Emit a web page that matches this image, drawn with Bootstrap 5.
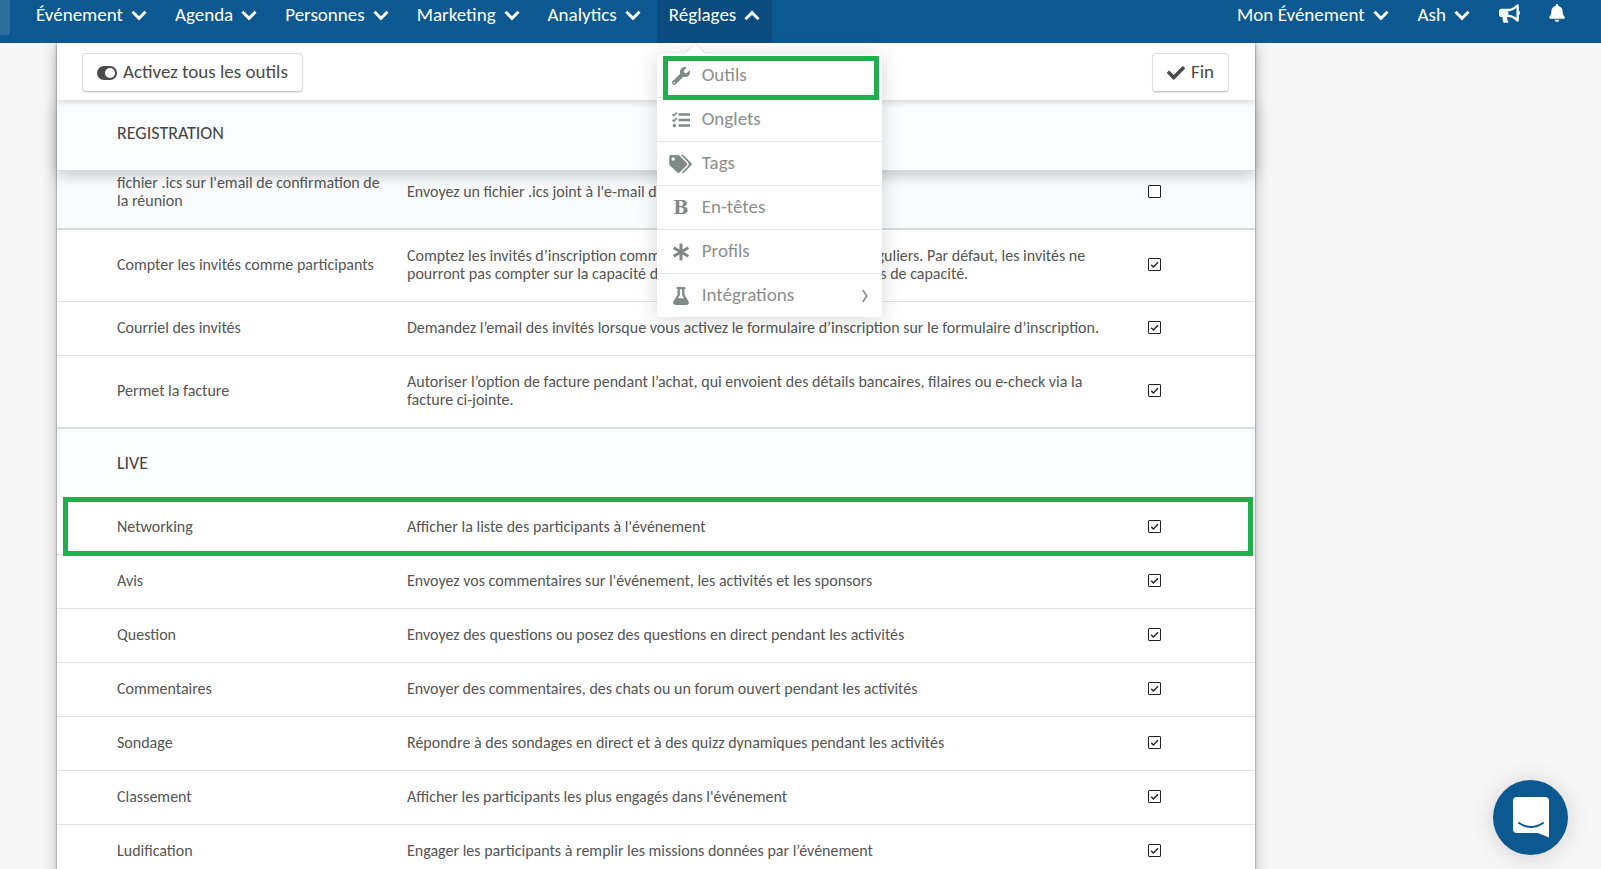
<!DOCTYPE html>
<html lang="fr">
<head>
<meta charset="utf-8">
<meta name="viewport" content="width=device-width, initial-scale=1">
<title>Outils</title>
<link href="https://cdn.jsdelivr.net/npm/bootstrap@5.3.0/dist/css/bootstrap.min.css" rel="stylesheet">
<style>
  :root { --brand: #0c5890; --mark: #22ae4c; --line: #dfe0e1; }
  body { font-family: Carlito, Lato, sans-serif; background: #f7f7f7; color: #555; height: 100vh; overflow: hidden; }
  svg { display: block; flex: none; }

  .topbar { background: var(--brand); height: 43px; z-index: 10; padding: 0 36px 0 0; }
  .brand-tab { width: 10px; height: 35px; background: #2f6d9c; border-radius: 0 0 3px 0; margin-right: 14px; }
  .topbar .nav-link { color: #fff; font-size: 19px; line-height: 22px; padding: 4px 12px 17px; display: flex; align-items: center; gap: 8px; }
  .topbar .nav-link.open { background: #0a4c80; }
  .main-nav { gap: 4px; }
  .user-nav { gap: 5px; }

  .tool-menu { display: block; position: absolute; top: 54px; left: 0; width: 225px; padding: 0; border: 0; border-radius: 4px; box-shadow: 0 2px 20px rgba(0,0,0,.16); }
  .tool-menu::before { content: ""; position: absolute; top: -7px; left: 31px; width: 14px; height: 14px; background: #fff; transform: rotate(45deg); box-shadow: -1px -1px 1px rgba(0,0,0,.08); }
  .tool-menu li + li { border-top: 1px solid #e4e5e5; }
  .tool-menu .dropdown-item { position: relative; display: flex; align-items: center; gap: 9px; height: 43px; padding: 0 14px 0 12px; color: #8a8f8d; font-size: 19px; border-radius: 4px; }
  .tool-menu .menu-icon { width: 24px; display: flex; justify-content: center; color: #7f8986; }
  .bold-mark { font: bold 18px/18px "DejaVu Serif", serif; }
  .picked::after { content: ""; position: absolute; inset: 2px 3px -3px 6px; border: 5px solid var(--mark); z-index: 1; }

  .page { padding: 0 346px 0 57px; }
  .panel { background: #fff; min-height: 100vh; box-shadow: 0 0 2px rgba(0,0,0,.55), 0 0 16px rgba(0,0,0,.25); }
  .tool-row { height: 57px; padding: 2px 26px 0 25px; background: #fff; position: relative; z-index: 3; box-shadow: 0 3px 6px rgba(0,0,0,.12); }
  .btn-tool { height: 39px; padding: 0 14px; font-size: 19px; color: #4a4a4a; background: #fff; border: 1px solid #dcdfde; border-bottom-color: #c9cccb; border-radius: 4px; box-shadow: 0 1px 1px rgba(0,0,0,.1); display: flex; align-items: center; gap: 6px; }
  .section-title { height: 72px; margin: 0; padding: 0 60px 2px; font-size: 18px; font-weight: 400; text-transform: uppercase; color: #444; background: #fafcfe; display: flex; align-items: center; }
  .section-title.stuck { height: 71px; position: relative; z-index: 2; border-bottom: 1px solid #d4d6d8; box-shadow: 0 4px 14px rgba(0,0,0,.22); }
  .under { margin-top: -14px; }
  .tools-table { table-layout: fixed; margin-bottom: 0; color: #555; font-size: 16px; line-height: 18px; --bs-table-bg: transparent; }
  .tools-table > tbody > tr > * { padding: 17px 30px 18px 0; border-bottom: 1px solid var(--line); vertical-align: middle; font-weight: 400; color: #555; }
  .tools-table > tbody > tr > th { padding-left: 60px; padding-right: 18px; }
  .tools-table > tbody > tr > .pick { padding-top: 0; padding-bottom: 2px; }
  .tools-table > tbody > tr.thick > * { border-bottom: 2px solid #dadddd; }
  .tools-table > tbody > tr.off > * { background: #fafbfd; }
  .tick { appearance: none; width: 13px; height: 13px; margin: 0; border: 1px solid #222; border-radius: 1px; display: block; background: #fff center/11px 11px no-repeat; }
  .tick:checked { background-image: url("data:image/svg+xml,%3Csvg xmlns='http://www.w3.org/2000/svg' viewBox='0 0 11 11'%3E%3Cpath d='M2.2 5.8l2.2 2.1 4.6-4.7' fill='none' stroke='%23222' stroke-width='1.4'/%3E%3C/svg%3E"); }
  .chosen { position: relative; }
  .chosen > th::after { content: ""; position: absolute; inset: -4px 2px -1px 6px; border: 5px solid var(--mark); }

  .chat { position: fixed; right: 33px; bottom: 14px; width: 75px; height: 75px; border: 0; border-radius: 50%; background: var(--brand); box-shadow: 0 2px 24px rgba(0,0,0,.16); display: flex; align-items: center; justify-content: center; padding: 0; }
</style>
</head>
<body>
<svg width="0" height="0" class="position-absolute" aria-hidden="true">
  <symbol id="down" viewBox="0 0 16 11"><path d="M1.5 1.8L8 8.3l6.500-6.500" fill="none" stroke="currentColor" stroke-width="3" stroke-linecap="butt"/></symbol>
  <symbol id="up" viewBox="0 0 16 11"><path d="M1.500 9.200L8 2.700l6.500 6.500" fill="none" stroke="currentColor" stroke-width="3"/></symbol>
</svg>

<header class="topbar d-flex justify-content-between position-relative">
  <nav class="d-flex">
    <div class="brand-tab"></div>
    <ul class="nav flex-nowrap main-nav">
      <li><a class="nav-link" href="#">Événement <svg width="16" height="11"><use href="#down"/></svg></a></li>
      <li><a class="nav-link" href="#">Agenda <svg width="16" height="11"><use href="#down"/></svg></a></li>
      <li><a class="nav-link" href="#">Personnes <svg width="16" height="11"><use href="#down"/></svg></a></li>
      <li><a class="nav-link" href="#">Marketing <svg width="16" height="11"><use href="#down"/></svg></a></li>
      <li><a class="nav-link" href="#">Analytics <svg width="16" height="11"><use href="#down"/></svg></a></li>
      <li class="position-relative">
        <a class="nav-link open" href="#" aria-expanded="true">Réglages <svg width="16" height="11"><use href="#up"/></svg></a>
        <ul class="dropdown-menu tool-menu">
          <li><a class="dropdown-item picked" href="#"><span class="menu-icon"><svg width="18" height="18" viewBox="0 0 512 512" fill="currentColor"><path d="M507.730 109.100c-2.240-9.030-13.540-12.090-20.120-5.510l-74.360 74.360-67.880-11.310-11.310-67.880 74.360-74.360c6.620-6.620 3.430-17.900-5.660-20.160-47.380-11.740-99.550.91-136.580 37.930-39.640 39.640-50.550 97.100-34.050 147.200L18.740 402.760c-24.990 24.990-24.990 65.510 0 90.500 24.990 24.990 65.510 24.990 90.500 0l213.210-213.210c50.120 16.710 107.470 5.680 147.370-34.220 37.070-37.070 49.700-89.320 37.910-136.730zM64 472c-13.260 0-24-10.750-24-24 0-13.260 10.740-24 24-24s24 10.740 24 24c0 13.250-10.750 24-24 24z"/></svg></span>Outils</a></li>
          <li><a class="dropdown-item" href="#"><span class="menu-icon"><svg width="18" height="16" viewBox="0 0 18 16"><g fill="none" stroke="currentColor"><path d="M6.500 2.500H18M6.500 8H18M6.500 13.500H18" stroke-width="2.400"/><path d="M.4 2.300l1.400 1.400L4.800.6M.4 7.800l1.400 1.400 3-3.100" stroke-width="1.600"/></g><circle cx="2.400" cy="13.500" r="1.700" fill="currentColor"/></svg></span>Onglets</a></li>
          <li><a class="dropdown-item" href="#"><span class="menu-icon"><svg width="23" height="18" viewBox="0 0 640 512" fill="currentColor"><path d="M497.941 225.941L286.059 14.059A48 48 0 0 0 252.118 0H48C21.490 0 0 21.490 0 48v204.118a48 48 0 0 0 14.059 33.941l211.882 211.882c18.744 18.745 49.136 18.746 67.882 0l204.118-204.118c18.745-18.745 18.745-49.137 0-67.882zM112 160c-26.510 0-48-21.490-48-48s21.490-48 48-48 48 21.490 48 48-21.490 48-48 48zm513.941 133.823L421.823 497.941c-18.745 18.745-49.137 18.745-67.882 0l-.36-.36L527.640 323.522c16.999-16.999 26.360-39.600 26.360-63.640s-9.362-46.641-26.360-63.640L331.397 0h48.721a48 48 0 0 1 33.941 14.059l211.882 211.882c18.745 18.745 18.745 49.137 0 67.882z"/></svg></span>Tags</a></li>
          <li><a class="dropdown-item" href="#"><span class="menu-icon bold-mark" aria-hidden="true">B</span>En-têtes</a></li>
          <li><a class="dropdown-item" href="#"><span class="menu-icon"><svg width="18" height="18" viewBox="0 0 18 18"><path d="M9 .5v17M1.600 4.700l14.800 8.600M16.400 4.700L1.600 13.300" fill="none" stroke="currentColor" stroke-width="3"/></svg></span>Profils</a></li>
          <li><a class="dropdown-item" href="#"><span class="menu-icon"><svg width="16" height="18" viewBox="0 0 448 512" fill="currentColor"><path d="M437.200 403.500L320 215V64h8c13.300 0 24-10.700 24-24V24c0-13.300-10.700-24-24-24H120c-13.300 0-24 10.700-24 24v16c0 13.300 10.700 24 24 24h8v151L10.800 403.500C-18.500 450.600 15.300 512 70.900 512h306.200c55.700 0 89.400-61.500 60.100-108.500zM137.900 320l48.200-77.600c3.700-5.200 5.800-11.600 5.800-18.400V64h64v160c0 6.900 2.200 13.200 5.800 18.400l48.200 77.600z"/></svg></span>Intégrations<svg class="ms-auto" width="6" height="14" viewBox="0 0 6 14"><path d="M1 1q1 2.500 3.800 6Q2 10.500 1 13" fill="none" stroke="currentColor" stroke-width="1.800"/></svg></a></li>
        </ul>
      </li>
    </ul>
  </nav>
  <ul class="nav flex-nowrap user-nav">
    <li><a class="nav-link" href="#">Mon Événement <svg width="16" height="11"><use href="#down"/></svg></a></li>
    <li><a class="nav-link" href="#">Ash <svg width="16" height="11"><use href="#down"/></svg></a></li>
    <li><a class="nav-link" href="#" aria-label="Annonces"><svg width="21" height="19" viewBox="0 0 576 512" fill="currentColor"><path d="M576 240c0-23.630-12.950-44.040-32-55.120V32.010C544 23.260 537.020 0 512 0c-7.120 0-14.190 2.380-19.980 7.020l-85.030 68.030C364.280 109.190 310.660 128 256 128H64c-35.350 0-64 28.650-64 64v96c0 35.350 28.650 64 64 64h33.700c-1.390 10.480-2.180 21.140-2.180 32 0 39.770 9.260 77.350 25.560 110.940 5.190 10.690 16.520 17.060 28.400 17.060h74.280c26.050 0 41.690-29.840 25.900-50.560-16.400-21.520-26.150-48.360-26.150-77.440 0-11.110 1.620-21.790 4.410-32H256c54.660 0 108.280 18.810 150.980 52.950l85.030 68.030a32.023 32.023 0 0 0 19.980 7.020c24.920 0 32-22.780 32-32V295.130C563.050 284.040 576 263.630 576 240zm-96 141.420l-33.050-26.440C392.950 311.780 325.120 288 256 288v-96c69.120 0 136.950-23.780 190.950-66.980L480 98.580v282.840z"/></svg></a></li>
    <li><a class="nav-link pe-0" href="#" aria-label="Notifications"><svg width="16" height="18" viewBox="0 0 448 512" fill="currentColor"><path d="M224 512c35.320 0 63.970-28.650 63.970-64H160.030c0 35.350 28.650 64 63.970 64zm215.390-149.710c-19.320-20.760-55.470-51.990-55.470-154.290 0-77.700-54.480-139.900-127.940-155.160V32c0-17.670-14.320-32-31.980-32s-31.980 14.330-31.980 32v20.840C118.560 68.100 64.080 130.300 64.080 208c0 102.300-36.150 133.530-55.470 154.290-6 6.450-8.660 14.160-8.610 21.710.11 16.400 12.980 32 32.100 32h383.800c19.120 0 32-15.600 32.100-32 .05-7.550-2.610-15.270-8.610-21.710z"/></svg></a></li>
  </ul>
</header>

<main class="page">
  <div class="panel">
    <div class="tool-row d-flex align-items-center justify-content-between">
      <button type="button" class="btn btn-tool"><svg width="20" height="14" viewBox="0 0 20 14"><rect width="20" height="14" rx="7" fill="currentColor"/><circle cx="13" cy="7" r="5" fill="#fff"/></svg>Activez tous les outils</button>
      <button type="button" class="btn btn-tool"><svg width="18" height="18" viewBox="0 0 512 512" fill="currentColor"><path d="M173.898 439.404l-166.400-166.400c-9.997-9.997-9.997-26.206 0-36.204l36.203-36.204c9.997-9.998 26.207-9.998 36.204 0L192 312.690 432.095 72.596c9.997-9.997 26.207-9.997 36.204 0l36.203 36.204c9.997 9.997 9.997 26.206 0 36.204l-294.400 294.401c-9.998 9.997-26.207 9.997-36.204-.001z"/></svg>Fin</button>
    </div>

    <section>
      <h2 class="section-title stuck">Registration</h2>
      <table class="table tools-table under">
        <colgroup><col style="width:350px"><col><col style="width:107px"></colgroup>
        <tbody>
          <tr class="thick off"><th scope="row"><label for="t1">fichier .ics sur l'email de confirmation de la réunion</label></th><td>Envoyez un fichier .ics joint à l'e-mail de confirmation</td><td class="pick"><input class="tick" type="checkbox" id="t1"></td></tr>
          <tr><th scope="row"><label for="t2">Compter les invités comme participants</label></th><td>Comptez les invités d’inscription comme des participants entièrement réguliers. Par défaut, les invités ne pourront pas compter sur la capacité des activités soumises à leurs limites de capacité.</td><td class="pick"><input class="tick" type="checkbox" id="t2" checked></td></tr>
          <tr><th scope="row"><label for="t3">Courriel des invités</label></th><td>Demandez l’email des invités lorsque vous activez le formulaire d’inscription sur le formulaire d’inscription.</td><td class="pick"><input class="tick" type="checkbox" id="t3" checked></td></tr>
          <tr class="thick"><th scope="row"><label for="t4">Permet la facture</label></th><td>Autoriser l’option de facture pendant l’achat, qui envoient des détails bancaires, filaires ou e-check via la facture ci-jointe.</td><td class="pick"><input class="tick" type="checkbox" id="t4" checked></td></tr>
        </tbody>
      </table>
    </section>

    <section>
      <h2 class="section-title">Live</h2>
      <table class="table tools-table">
        <colgroup><col style="width:350px"><col><col style="width:107px"></colgroup>
        <tbody>
          <tr class="chosen"><th scope="row"><label for="t5">Networking</label></th><td>Afficher la liste des participants à l'événement</td><td class="pick"><input class="tick" type="checkbox" id="t5" checked></td></tr>
          <tr><th scope="row"><label for="t6">Avis</label></th><td>Envoyez vos commentaires sur l'événement, les activités et les sponsors</td><td class="pick"><input class="tick" type="checkbox" id="t6" checked></td></tr>
          <tr><th scope="row"><label for="t7">Question</label></th><td>Envoyez des questions ou posez des questions en direct pendant les activités</td><td class="pick"><input class="tick" type="checkbox" id="t7" checked></td></tr>
          <tr><th scope="row"><label for="t8">Commentaires</label></th><td>Envoyer des commentaires, des chats ou un forum ouvert pendant les activités</td><td class="pick"><input class="tick" type="checkbox" id="t8" checked></td></tr>
          <tr><th scope="row"><label for="t9">Sondage</label></th><td>Répondre à des sondages en direct et à des quizz dynamiques pendant les activités</td><td class="pick"><input class="tick" type="checkbox" id="t9" checked></td></tr>
          <tr><th scope="row"><label for="t10">Classement</label></th><td>Afficher les participants les plus engagés dans l'événement</td><td class="pick"><input class="tick" type="checkbox" id="t10" checked></td></tr>
          <tr><th scope="row"><label for="t11">Ludification</label></th><td>Engager les participants à remplir les missions données par l’événement</td><td class="pick"><input class="tick" type="checkbox" id="t11" checked></td></tr>
        </tbody>
      </table>
    </section>
  </div>
</main>

<button type="button" class="chat" aria-label="Ouvrir la messagerie"><svg width="36" height="41" viewBox="0 0 36 41"><path d="M4 0h28a4 4 0 0 1 4 4v36.500L25 36H4a4 4 0 0 1-4-4V4a4 4 0 0 1 4-4z" fill="#fff"/><path d="M6 26q12 8 24 0" fill="none" stroke="#0c5890" stroke-width="2" stroke-linecap="round"/></svg></button>
<script src="https://cdn.jsdelivr.net/npm/bootstrap@5.3.0/dist/js/bootstrap.bundle.min.js"></script>
</body>
</html>
